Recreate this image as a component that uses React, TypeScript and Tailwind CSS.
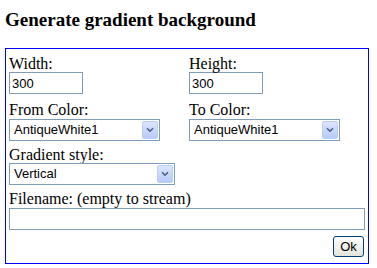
import { ChevronDown } from "lucide-react";

const serif = { fontFamily: '"Liberation Serif", "Times New Roman", serif' };
const sans = { fontFamily: '"Liberation Sans", Arial, sans-serif' };

const Label = ({ text, className = "" }: { text: string; className?: string }) => (
  <div className={`h-[17px] text-[16px] leading-[17px] text-black whitespace-nowrap ${className}`} style={serif}>
    {text}
  </div>
);

const TextBox = ({ value, className = "" }: { value: string; className?: string }) => (
  <input
    type="text"
    defaultValue={value}
    className={`block h-[22px] border border-[#7f9db9] bg-white px-[2px] text-[13px] text-black outline-none ${className}`}
    style={sans}
  />
);

const Select = ({ value, className = "" }: { value: string; className?: string }) => (
  <div className={`relative h-[22px] border border-[#7f9db9] bg-white ${className}`}>
    <div className="pl-[4px] text-[13px] leading-[20px] text-black" style={sans}>
      {value}
    </div>
    <div className="absolute right-[1px] top-[1px] bottom-[1px] w-[16px] flex items-center justify-center rounded-[2px] border border-[#b9cdf6] bg-gradient-to-b from-[#dbe5fc] to-[#b7cbf8]">
      <ChevronDown className="w-[10px] h-[10px] text-[#4d6185]" strokeWidth={4} />
    </div>
  </div>
);

export default function App() {
  return (
    <div className="w-[377px] h-[268px] bg-white px-[5px] overflow-hidden">
      <h3 className="pt-[9px] h-[48px] text-[19px] font-bold leading-[22px] text-black" style={serif}>
        Generate gradient background
      </h3>
      <div className="w-[364px] h-[216px] border border-[#0000ff] px-[3px] pt-[6px]">
        <div className="grid grid-cols-[180px_1fr]">
          <div>
            <Label text="Width:" />
            <TextBox value="300" className="w-[74px]" />
          </div>
          <div>
            <Label text="Height:" />
            <TextBox value="300" className="w-[74px]" />
          </div>
          <div className="mt-[7px]">
            <Label text="From Color:" />
            <Select value="AntiqueWhite1" className="w-[151px] mt-[1px]" />
          </div>
          <div className="mt-[7px]">
            <Label text="To Color:" />
            <Select value="AntiqueWhite1" className="w-[151px] mt-[1px]" />
          </div>
        </div>
        <div className="mt-[5px]">
          <Label text="Gradient style:" />
          <Select value="Vertical" className="w-[166px] h-[21px]" />
        </div>
        <div className="mt-[5px]">
          <Label text="Filename: (empty to stream)" />
          <TextBox value="" className="w-[356px] mt-[1px]" />
        </div>
        <div className="flex justify-end mt-[6px] pr-[1px]">
          <button
            className="h-[21px] w-[31px] rounded-[3px] border border-[#003c74] bg-gradient-to-b from-[#ffffff] to-[#e3e3db] text-[13px] text-black"
            style={sans}
          >
            Ok
          </button>
        </div>
      </div>
    </div>
  );
}
